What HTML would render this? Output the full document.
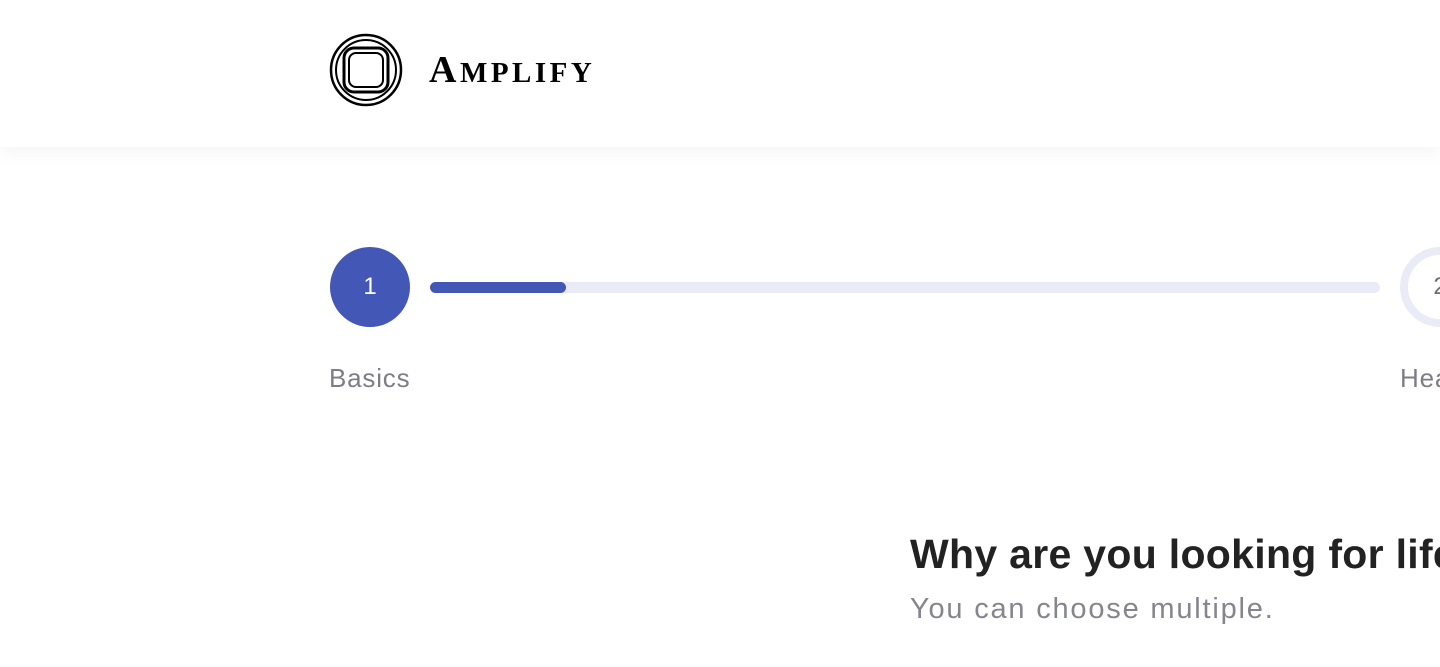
<!DOCTYPE html>
<html><head><meta charset="utf-8"><style>
html,body{margin:0;width:1440px;height:667px;overflow:hidden}
body{background:#fff;font-family:"Liberation Sans",sans-serif;position:relative}
.wrap{position:absolute;left:0;top:0;width:1440px;height:667px;overflow:hidden}
.hdr{position:absolute;left:0;top:0;width:1440px;height:147px;background:#fff;box-shadow:0 4px 18px rgba(0,0,0,0.05)}
.logo{position:absolute;left:329px;top:33px}
.brand{position:absolute;left:429px;top:50px;font-family:"Liberation Serif",serif;font-weight:bold;font-size:38px;line-height:40px;color:#000;letter-spacing:3.5px}
.brand small{font-size:29px}
.c1{position:absolute;left:330px;top:247px;width:80px;height:80px;border-radius:50%;background:#4257b6;color:#fff;font-size:24px;text-align:center;line-height:80px}
.track{position:absolute;left:430px;top:282px;width:950px;height:11px;border-radius:6px;background:#e9ecf6}
.fill{position:absolute;left:430px;top:282px;width:136px;height:11px;border-radius:6px;background:#4257b6}
.c2{position:absolute;left:1400px;top:247px;width:64px;height:64px;border-radius:50%;border:8px solid #e9ecf6;color:#6e6e78;font-size:24px;line-height:64px;text-align:center}
.lbl{position:absolute;top:363px;font-size:26px;color:#7d7d86;letter-spacing:0.8px}
h1{position:absolute;left:910px;top:531px;margin:0;font-size:41px;font-weight:bold;color:#222;white-space:nowrap;letter-spacing:0.3px}
.sub{position:absolute;left:910px;top:593px;font-size:29px;color:#85858e;white-space:nowrap;letter-spacing:1.8px}
</style></head><body><div class="wrap">
<div class="hdr">
<svg class="logo" width="74" height="74" viewBox="0 0 74 74" fill="none" stroke="#000">
<circle cx="37" cy="37" r="35" stroke-width="2.5"/>
<circle cx="37" cy="37" r="30" stroke-width="2"/>
<rect x="15" y="15" width="44" height="44" rx="10" stroke-width="3"/>
<rect x="20" y="20" width="34" height="34" rx="7" stroke-width="2"/>
</svg>
<div class="brand">A<small>MPLIFY</small></div>
</div>
<div class="track"></div><div class="fill"></div>
<div class="c1">1</div>
<div class="c2">2</div>
<div class="lbl" style="left:329px">Basics</div>
<div class="lbl" style="left:1400px">Health</div>
<h1>Why are you looking for life insurance?</h1>
<div class="sub">You can choose multiple.</div>
</div></body></html>
